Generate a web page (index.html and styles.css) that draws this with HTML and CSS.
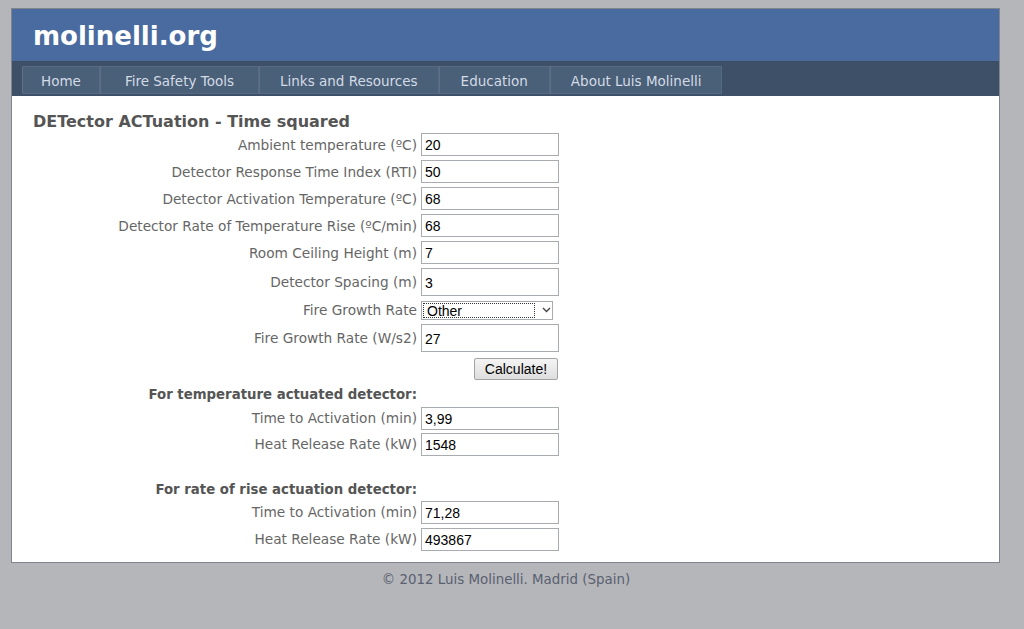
FILE: index.html
```html
<!DOCTYPE html>
<html>
<head>
	<title>molinelli.org - DETACT T2</title>
	<meta charset="utf-8" />
	<link rel="stylesheet" href="styles.css">
</head>
<body>
	<div class="page">
		<div class="header">
			<div class="logo">molinelli.org</div>
		</div>
		<div class="nav">
			<a class="nav-item" href="#">Home</a>
			<a class="nav-item" href="#">Fire Safety Tools</a>
			<a class="nav-item" href="#">Links and Resources</a>
			<a class="nav-item" href="#">Education</a>
			<a class="nav-item" href="#">About Luis Molinelli</a>
		</div>
		<div class="content">
			<h2 class="title">DETector ACTuation - Time squared</h2>
			<div class="form">
				<div class="row r27">
					<span class="lbl">Ambient temperature (ºC)</span>
					<input class="field" type="text" value="20" />
				</div>
				<div class="row r27">
					<span class="lbl">Detector Response Time Index (RTI)</span>
					<input class="field" type="text" value="50" />
				</div>
				<div class="row r27">
					<span class="lbl">Detector Activation Temperature (ºC)</span>
					<input class="field" type="text" value="68" />
				</div>
				<div class="row r27">
					<span class="lbl">Detector Rate of Temperature Rise (ºC/min)</span>
					<input class="field" type="text" value="68" />
				</div>
				<div class="row r27">
					<span class="lbl">Room Ceiling Height (m)</span>
					<input class="field" type="text" value="7" />
				</div>
				<div class="row r32">
					<span class="lbl">Detector Spacing (m)</span>
					<input class="field tall" type="text" value="3" />
				</div>
				<div class="row r24">
					<span class="lbl">Fire Growth Rate</span>
					<div class="select">
						<span class="select-val">Other</span>
						<svg class="select-arrow" width="9" height="6" viewBox="0 0 9 6"><path d="M1 1 L4.5 4.5 L8 1" fill="none" stroke="#444" stroke-width="1.4"/></svg>
					</div>
				</div>
				<div class="row r32">
					<span class="lbl">Fire Growth Rate (W/s2)</span>
					<input class="field tall" type="text" value="27" />
				</div>
				<div class="row r30">
					<span class="lbl"></span>
					<div class="btn-cell"><button class="btn">Calculate!</button></div>
				</div>
				<div class="row r20">
					<span class="lbl bold">For temperature actuated detector:</span>
				</div>
				<div class="row r28">
					<span class="lbl">Time to Activation (min)</span>
					<input class="field" type="text" value="3,99" />
				</div>
				<div class="row r24">
					<span class="lbl">Heat Release Rate (kW)</span>
					<input class="field" type="text" value="1548" />
				</div>
				<div class="spacer"></div>
				<div class="row r20">
					<span class="lbl bold">For rate of rise actuation detector:</span>
				</div>
				<div class="row r26">
					<span class="lbl">Time to Activation (min)</span>
					<input class="field" type="text" value="71,28" />
				</div>
				<div class="row r28">
					<span class="lbl">Heat Release Rate (kW)</span>
					<input class="field" type="text" value="493867" />
				</div>
			</div>
		</div>
	</div>
	<div class="footer">© 2012 Luis Molinelli. Madrid (Spain)</div>
</body>
</html>
```

FILE: styles.css
```css
body {
	margin: 0;
	padding: 0;
	background-color: #b5b6ba;
	font-family: "DejaVu Sans", Verdana, sans-serif;
}
.page {
	margin: 8px 0 0 11px;
	width: 987px;
	border: 1px solid #7f858d;
	background-color: #ffffff;
}
.header {
	background-color: #4a6ba0;
	height: 52px;
	padding-left: 21px;
}
.logo {
	color: #ffffff;
	font-size: 26px;
	font-weight: bold;
	line-height: 54px;
}
.nav {
	background-color: #3d5068;
	height: 35px;
	padding: 4px 0 0 10px;
	box-sizing: border-box;
	display: flex;
	border-top: 1px solid #3a4d63;
}
.nav-item {
	display: block;
	height: 28px;
	line-height: 28px;
	box-sizing: border-box;
	padding: 0 20px;
	background-color: #4a5f78;
	border: 1px solid #566a82;
	border-left-color: #5d7088;
	color: #d3dbe6;
	font-size: 13.5px;
	text-decoration: none;
}
.nav-item:first-child { padding: 0 18px; }
.nav-item:nth-child(2) { padding: 0 24px; }
.nav-item:nth-child(4) { padding: 0 21px; }
.content {
	padding: 16px 0 9px 21px;
}
.title {
	margin: 0;
	font-size: 16px;
	font-weight: bold;
	color: #555555;
	line-height: 19px;
}
.row {
	display: flex;
	align-items: center;
}
.r20 { height: 20px; }
.r24 { height: 24px; }
.r26 { height: 26px; }
.r27 { height: 27px; }
.r28 { height: 28px; }
.r30 { height: 30px; }
.r32 { height: 32px; }
.spacer { height: 23px; }
.lbl {
	width: 388px;
	text-align: right;
	padding-right: 4px;
	box-sizing: border-box;
	color: #666666;
	font-size: 13.7px;
	white-space: nowrap;
}
.lbl.bold {
	font-weight: bold;
	font-size: 13.3px;
	color: #555555;
}
.field {
	width: 138px;
	height: 23px;
	box-sizing: border-box;
	margin: 0;
	padding: 1px 3px 0 3px;
	border: 1px solid #a8abb0;
	font-family: "Liberation Sans", Arial, sans-serif;
	font-size: 14px;
	color: #000000;
	background: #ffffff;
}
.field.tall {
	height: 28px;
}
.select {
	position: relative;
	width: 132px;
	height: 19px;
	box-sizing: border-box;
	border: 1px solid #a8abb0;
	padding: 1px;
	display: flex;
	align-items: center;
}
.select-val {
	display: block;
	width: 112px;
	height: 15px;
	box-sizing: border-box;
	border: 1px dotted #333333;
	font-family: "Liberation Sans", Arial, sans-serif;
	font-size: 14px;
	line-height: 14px;
	padding-left: 3px;
	color: #000000;
}
.select-arrow {
	margin-left: 7px;
}
.btn-cell {
	width: 138px;
	display: flex;
	justify-content: flex-end;
}
.btn {
	height: 22px;
	width: 84px;
	margin-right: 1px;
	padding: 0;
	border: 1px solid #a3a3a3;
	border-radius: 2px;
	background: linear-gradient(#f4f4f4, #dedede);
	font-family: "Liberation Sans", Arial, sans-serif;
	font-size: 14px;
	color: #000000;
}
.footer {
	text-align: center;
	font-size: 13.4px;
	color: #596070;
	padding: 9px 0 0 0;
	width: 1012px;
}
```
